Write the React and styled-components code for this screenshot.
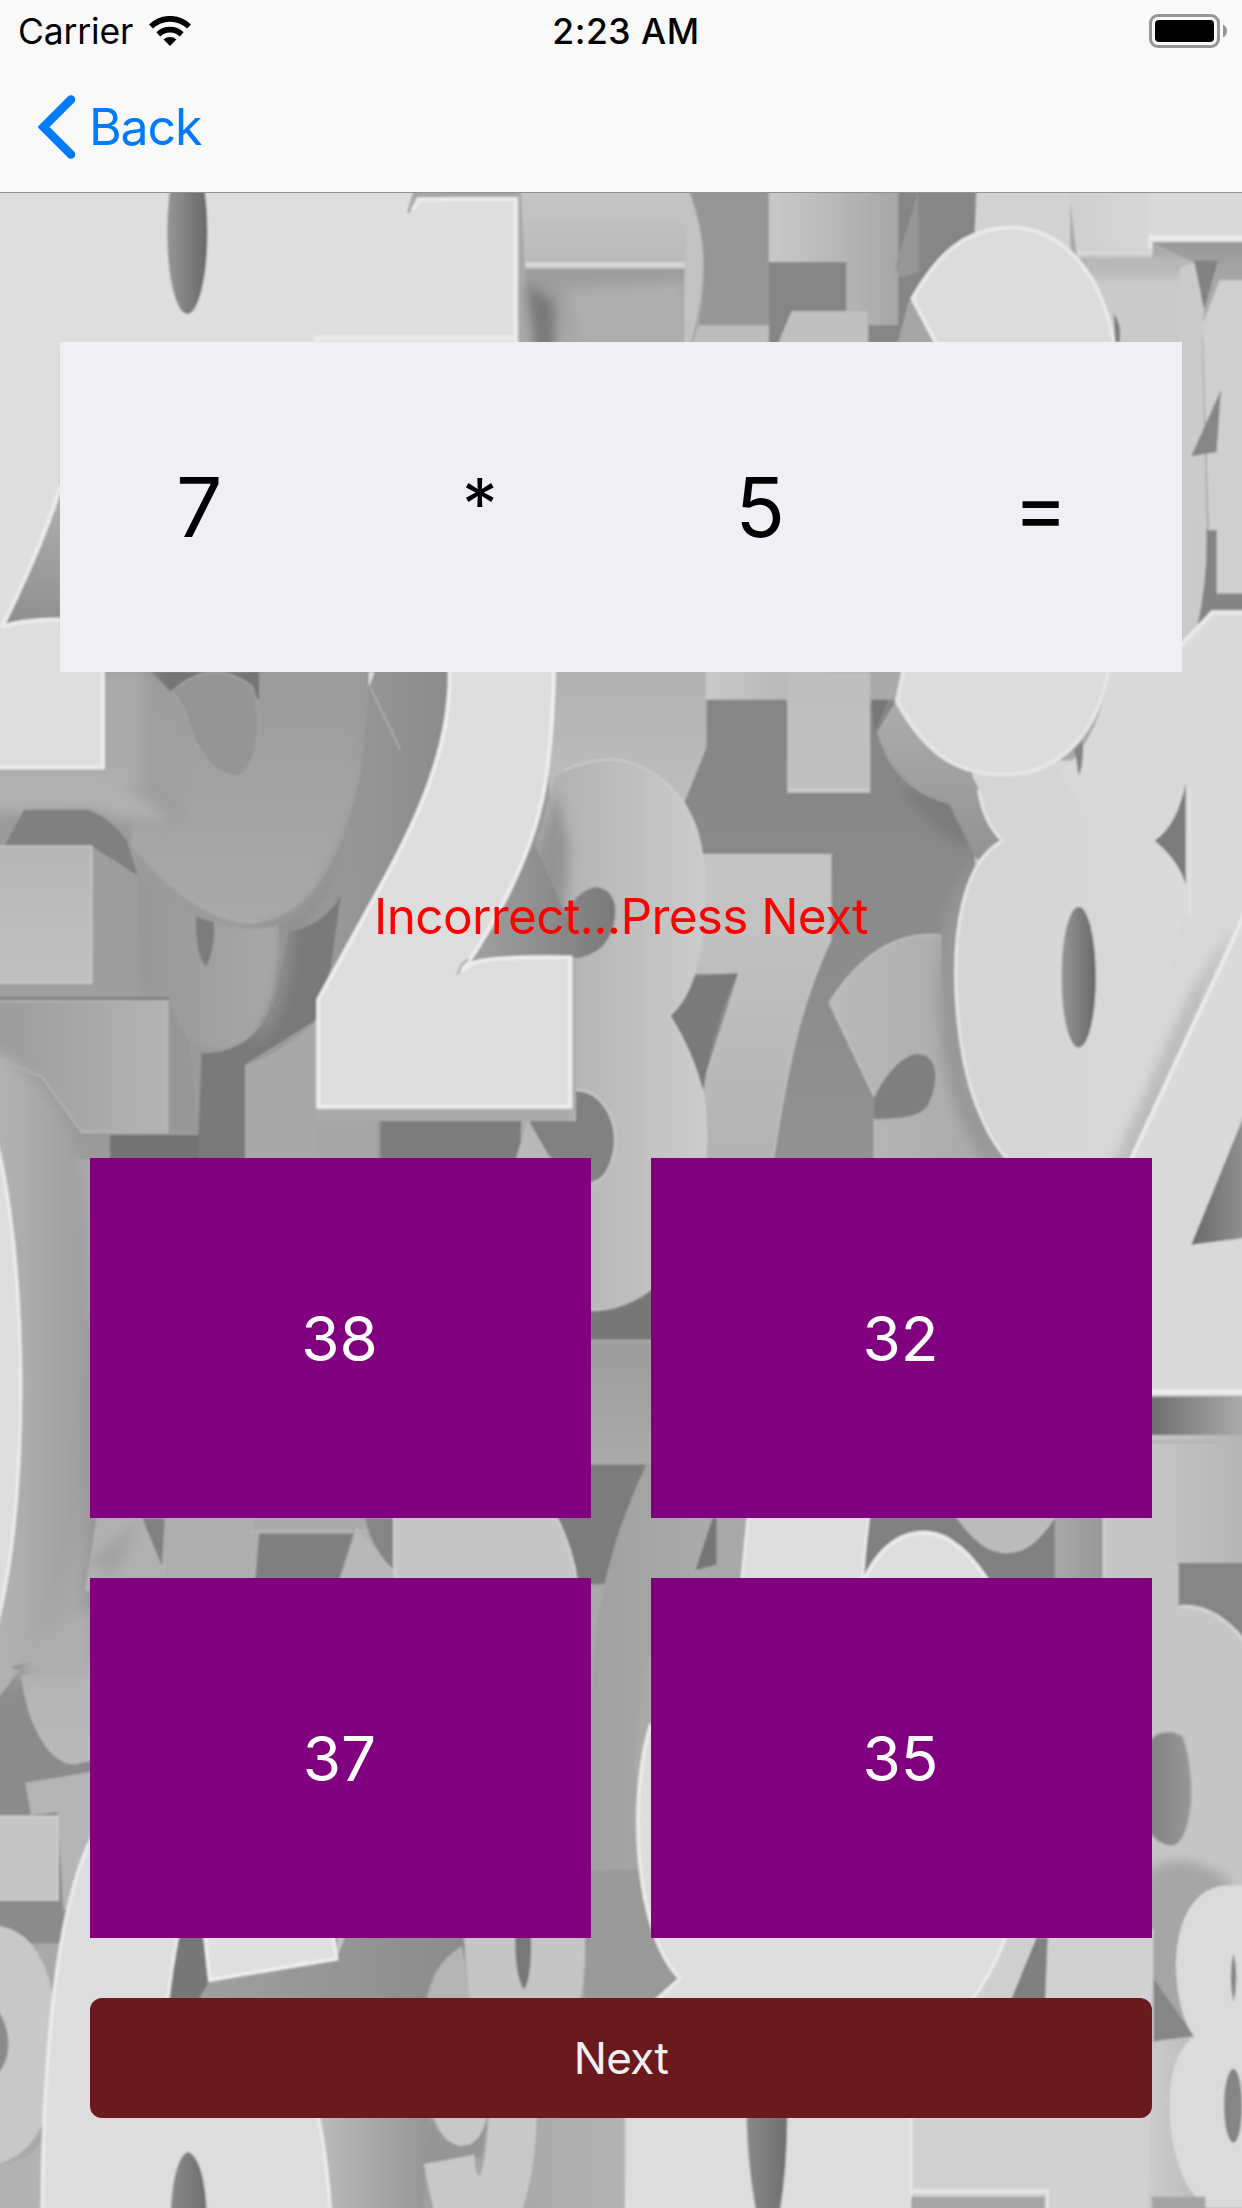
import React from "react";
import styled, { createGlobalStyle } from "styled-components";

const GlobalStyle = createGlobalStyle`
  body { margin: 0; background: #f9f9f9; }
  * { box-sizing: border-box; }
`;

const Screen = styled.div`
  width: 1242px;
  height: 2208px;
  display: flex;
  flex-direction: column;
  overflow: hidden;
  font-family: Inter, "Liberation Sans", sans-serif;
  color: #000;
`;

const Header = styled.header`
  flex: none;
  height: 193px;
  background: #f9f9f9;
  border-bottom: 1px solid #929292;
`;

const StatusBar = styled.div`
  height: 60px;
  display: grid;
  grid-template-columns: 1fr auto 1fr;
  align-items: center;
  padding: 2px 15px 0 18px;
`;

const Carrier = styled.div`
  display: flex;
  align-items: center;
  gap: 16px;
  font-size: 35.5px;
  letter-spacing: -0.15px;
`;

const Clock = styled.div`
  padding-left: 7px;
  font-size: 35.5px;
  font-weight: 500;
  letter-spacing: 0.5px;
`;

const BatterySlot = styled.div`
  justify-self: end;
  display: flex;
`;

const NavBar = styled.nav`
  height: 132px;
  padding: 1px 0 0 38px;
  display: flex;
  align-items: center;
`;

const BackButton = styled.button`
  display: flex;
  align-items: center;
  gap: 13px;
  padding: 0;
  border: 0;
  background: none;
  color: #007aff;
  font: inherit;
  font-size: 50px;
  letter-spacing: -1.1px;
`;

const Body = styled.main`
  position: relative;
  flex: 1;
  display: flex;
  flex-direction: column;
  padding: 149px 60px 90px;
`;

const Backdrop = styled.svg`
  position: absolute;
  left: 0;
  bottom: 0;
  width: 1242px;
  height: 2208px;
  clip-path: inset(193px 0 0 0);
`;

const Equation = styled.section`
  position: relative;
  height: 330px;
  display: grid;
  grid-template-columns: repeat(4, 1fr);
  align-items: center;
  text-align: center;
  background: #efeff4;
`;

const Term = styled.span`
  font-size: ${(p) => (p.$operator ? 71 : 82)}px;
  padding: 0 2px ${(p) => (p.$operator ? 7 : 0)}px 0;
`;

const Feedback = styled.p`
  position: relative;
  height: 486px;
  margin: 0;
  padding-top: 2px;
  display: flex;
  align-items: center;
  justify-content: center;
  color: #ff0000;
  font-size: 49.5px;
  letter-spacing: -0.62px;
`;

const Answers = styled.section`
  position: relative;
  display: grid;
  grid-template-columns: 1fr 1fr;
  grid-auto-rows: 360px;
  gap: 60px;
  padding: 0 30px;
`;

const Answer = styled.button`
  border: 0;
  padding: 0 2px 0 0;
  background: #800080;
  color: #fff;
  font: inherit;
  font-size: 62px;
`;

const NextButton = styled.button`
  position: relative;
  height: 120px;
  margin: 60px 30px 0;
  border: 0;
  padding: 0;
  border-radius: 12px;
  background: #6a1a1c;
  color: #efeff4;
  font: inherit;
  font-size: 44px;
  letter-spacing: -0.6px;
`;

const HI = "#ebebeb";

/* Pile of block numerals, back to front: [path, fill, edge highlight, edge width, blurred] */
const pile = [
  // upper edge
  ["M-9 120H368V250H-9z", "#dedede"],
  ["M298 120H368V140H296L289 151z", "#a6a6a6"],
  ["M296 137.500L290 151", "none", "#a8a8a8", 2],
  ["M293 149L298 142Q330 141 366 141.500V250", "none", HI, 3],
  ["M225 250V240H366", "none", HI, 3],
  ["M369 120H491V192H373z", "url(#topSlab)"],
  ["M373 188H490", "none", "#d6d6d6", 4],
  ["M373 191H490V250H379z", "url(#darkDown)"],
  ["M402 206L416 250H487V200z", "#aeaeae", null, 0, true],
  ["M374 200L380 250H394V215z", "#787878", null, 0, true],
  ["M489 120Q509 180 491 241L486 250V190z", "#c2c2c2"],
  ["M490 120H546V231H496Q506 180 490 137z", "#969696"],
  ["M546 186H606V221H562L552 250H546z", "#858585"],
  ["M546 120H640V232H601V186H546z", "url(#slabA)"],
  ["M638 120H694V170L645 215L636 250H617V231H638z", "#858585"],
  ["M652 137L636 188L638 197L652 194z", "#969696"],
  ["M496 231H546V250H490z", "#bcbcbc"],
  ["M562 221H616V250H550z", "#c0c0c0"],
  ["M694 120H760V220H690z", "#d2d2d2"],
  ["M757 120H818V184H765z", "url(#slabB)"],
  ["M765 180H817V168", "none", "#e6e6e6", 3],
  ["M772 185H852L860 480H795z", "#cacaca"],
  ["M760 182H852V196H772z", "#b6b6b6", null, 0, true],
  ["M815 120H892V172H815z", "#d9d9d9"],
  ["M816 169H892", "none", "#ebebeb", 4],
  ["M818 172H892V202H857L855 218L849 187z", "url(#underSlab)"],
  ["M848 185H865L855 220z", "#828282"],
  ["M866 199H892V424H860L854 230z", "#cfcfcf"],
  ["M838 190L848 187L855 220L842 460z", "#cbcbcb"],
  ["M867 277L864 321L846 324z", "#868686"],
  ["M856.600 376.500H864V421.500H892V433H860L850 446Q858 410 856.600 376.500z", "#848484"],
  ["M648 212L635 250H668z", "#a5a5a5"],
  ["M668 250L648 212C664 184 683 162 718 161.500C753 162 784 192 792 250z", "#dbdbdb", "#e9e9e9", 2.800],
  ["M791 223Q797 230 795 243H792z", "#7e7e7e"],
  // left edge next to the equation panel
  ["M-9 240H43V550H-9z", "#dedede"],
  ["M43 346Q31 385 3 443Q15 439 43 439z", "url(#wedge)"],
  ["M43 345Q31 385 1 446Q15 440 43 440", "none", HI, 3],

  // middle band, far layer
  ["M43 470H420V823H-9V560z", "#9b9b9b"],
  ["M232 470H320L318 540L225 720L210 700L250 600z", "url(#slatMid)"],
  ["M256 477H266L262 488z", "#e3e3e3"],
  ["M263 488L284 532", "none", "#acacac", 1.500],
  ["M100 470H262C262 560 240 650 180 656C142 656 110 620 93 601z", "url(#nine)"],
  ["M261 470C262 545 250 600 219 640Q205 658 180 657Q195 668 214 661C236 640 250 600 254 562z", "#8f8f8f", null, 0, true],
  ["M107 477H184V497L165 484L121 491z", "#747474"],
  ["M122 491Q150 466 179 487C188 510 182 552 167 551C150 550 139 530 134 514Q130 499 122 491z", "#959595", "#a6a6a6", 1],
  ["M98 620Q110 640 137 650Q165 664 198 657C198 700 190 742 157 744Q110 742 100 690z", "url(#nineSmall)"],
  ["M139 651L152 655Q153 672 147 686Q139 682 139 651z", "#7c7c7c"],
  ["M242 636L235 686L225 724L174 756V830H140L143 748C170 748 190 734 197 700L205 662Q230 657 242 636z", "#797979"],
  ["M198 657L208 661Q204 730 178 742Q202 706 198 657z", "#929292", null, 0, true],
  ["M225 724V830H174V757Q205 745 225 724z", "#a8a8a8"],
  ["M225 790H268V830H225z", "#a6a6a6"],
  ["M270 795H380V830H270z", "#7d7d7d"],
  ["M74 477H107Q118 497 132 515V585Q100 590 62 575L-9 577V545z", "#9f9f9f", null, 0, true],
  ["M74 477H100V560H74z", "#acacac", null, 0, true],
  ["M-9 546H74L120 582Q90 584 64 574L-9 577z", "#b0b0b0", null, 0, true],
  ["M17 575H62Q78 580 90 597L98 622L65 601H3z", "#808080"],
  ["M-9 446H74V545H-9z", "#dedede"],
  ["M73 477V545H-9", "none", HI, 3],
  ["M65 601L98 622V709H-9V698H65z", "#9e9e9e"],
  ["M-9 601H65V698H-9z", "url(#blockTwo)", "#c5c5c5", 1.500],
  ["M-9 708H120V712H-9z", "#808080"],
  ["M119 711L135 742L140 804H119z", "#979797"],
  ["M-9 711H119V804H58L30 765L-9 748z", "url(#blockThree)", "#b8b8b8", 1.200],
  ["M78 806H141V830H78z", "#737373"],
  ["M-9 744Q26 757 49 802Q66 846 64 985C67 1100 40 1170 -9 1220z", "url(#zeroSide)", null, 0, true],
  ["M62 940H72V1200H58z", "#979797", null, 0, true],
  ["M-9 790C21 870 24 1090 -9 1174z", "#dddddd", HI, 2.500],

  // three behind the two
  ["M390 470H501V533L486 570L430 545L390 600z", "url(#slabRise)"],
  ["M501 470H618V497H501z", "url(#slabA)"],
  ["M486 570L502 530V497H710V830H490z", "url(#voidMid)"],
  ["M559 490H618V563H559z", "#c0c0c0"],
  ["M559 477H618V500H559z", "#bebebe"],
  ["M560 561H617", "none", "#cccccc", 2.500],
  ["M499 607H590V667C570 710 560 750 548 830H498V775L525 691H490z", "url(#seven)", "#c6c6c6", 1],
  ["M494 693L524 691Q508 725 499 776L476 722z", "#7a7a7a"],
  ["M394 552Q423 531 452 543C491 560 502 595 500 640Q498 703 475 721Q492 747 500 780C508 850 486 934 420 930L370 820V640z", "url(#three)"],
  ["M401 547Q430 534 452 543C491 560 502 595 500 640Q498 703 475 721Q492 747 500 780C508 850 486 934 420 930", "none", "#cccccc", 1.500],
  ["M395 560L376 620L345 676L400 678L404 600z", "#949494", null, 0, true],
  ["M401 648Q413 630 424 630Q437 632 437 648Q435 679 405 681H330L380 600z", "url(#holeThree)"],
  ["M409 774C426 774 438 792 437 813C435 827 430 838 421 840L388 820L376 797z", "#818181"],
  ["M409 774C426 774 438 792 437 813C435 827 430 838 421 840", "none", "#c6c6c6", 2],
  ["M375 795L364 830H395z", "#b9b9b9"],
  ["M225 786H409V796H225z", "#aaaaaa"],
  ["M406 680H409V796H404z", "#b0b0b0"],
  ["M319 470C323 530 292 590 270 630Q247 672 226 710V786H405V680Q350 679 335 684L328 690Q376 620 387 558Q393 520 393.500 470z", "#dddddd", "#eeeeee", 2.800],
  ["M325 692L328 685L333 681", "none", "#acacac", 1.500],

  // eights, fours on the right
  ["M690 540H890V830H700z", "url(#eightFace)"],
  ["M839 455L860 434H892V680L800 560L780 470z", "#dadada"],
  ["M838 459L861 435H892", "none", "#e9e9e9", 3],
  ["M619 497H631L621 520z", "#777777"],
  ["M640 560Q660 590 684 600L700 590L690 560z", "#7c7c7c", null, 0, true],
  ["M636 498L623 520Q634 561 674 571L694 611L712 597L690 550z", "url(#threeSide)"],
  ["M643 470L637 498C660 540 684 550 714 550C752 550 782 520 788 470z", "#dbdbdb", "#e6e6e6", 2.800],
  ["M789 470Q782 525 752 549L780 590H846V470z", "#d9d9d9"],
  ["M763 532L769 526Q770 542 766 551z", "#858585"],
  ["M589 712Q622 660 668 664V700L705 830H621V795L640 780L621 779z", "url(#twoBack)", "#c0c0c0", 1.200],
  ["M621 779C631 759 645 746 655 749C668 753 665 771 660 783C655 794 640 794 621 795z", "#7f7f7f"],
  ["M694 610C669 635 661 690 669 745Q677 800 704 830H722L688 770L681 650z", "#989898", null, 0, true],
  ["M695 560Q699 585 712 597C684 612 677 660 679 705C682 770 700 810 722 830H802L850 600z", "url(#eightFace)"],
  ["M695 561Q699 585 712 597C684 612 677 660 679 705C682 770 700 810 722 830", "none", "#e6e6e6", 2.200],
  ["M845 560V650", "none", "#e2e2e2", 1.500],
  ["M842 556Q836 586 820 597Q837 611 842 628z", "#7c7c7c"],
  ["M880 652L802 840H784L845 705z", "#bcbcbc", null, 0, true],
  ["M892 632L800 830V988H892z", "#dadada"],
  ["M892 632L800 830", "none", "#ebebeb", 2.800],
  ["M892 771L846 884L892 878z", "url(#fourHole)"],
  ["M810 989H892", "none", "#ebebeb", 4],

  // strip between answer columns and rows
  ["M419 931Q444 931 464 915V952H419z", "#777777"],
  ["M419 952H464V1040H419z", "url(#darkDown)", "#b4b4b4", 1],
  ["M385 1040H464V1125H385z", "#7b7b7b"],
  ["M70 1070H280V1130H60z", "#b0b0b0"],
  ["M101 1078H117L115 1112z", "#818181"],
  ["M64 1108L99 1080L82 1120z", "#a3a3a3", null, 0, true],
  ["M118 1070H177V1130H118z", "#adadad"],
  ["M178 1070H260V1087H178z", "#aaaaaa", "#b6b6b6", 1],
  ["M184 1089H253L240 1125H181z", "#808080"],
  ["M253 1084L240 1125H290z", "#b8b8b8"],
  ["M259 1078H279V1114Q265 1102 259 1078z", "#858585"],
  ["M280 1070H391Q406 1095 410 1125H283L280 1116z", "#c6c6c6", "#d2d2d2", 1.500],
  ["M415 1328H490V1425H415z", "#9a9a9a"],
  ["M460 1038C435 1090 422 1140 420 1200V1328H458L450 1253L458 1186L494 1116L512 1070L470 1038z", "url(#stem)"],
  ["M506 1078H509V1111L494 1115z", "#757575"],
  ["M509 1070H531V1130H490L495 1116L509 1112z", "#a9a9a9"],
  ["M617 1070H755V1130H610z", "#818181"],
  ["M674 1070H754Q735 1104 715 1103Q695 1104 674 1070z", "#bbbbbb"],
  ["M749 1070H784V1130H749z", "url(#slabRev)"],
  ["M532 1070H618Q614 1095 612 1130H526z", "#dddddd", HI, 2],
  ["M610 1130Q627 1088 657 1088.500Q682 1089 706 1130z", "#dddddd", HI, 3],
  ["M784 1070H892V1340H784z", "#c6c6c6", "#d2d2d2", 2],
  ["M815 992H892V1020H815z", "url(#darkBar)"],
  ["M815 1019H892V1112H815z", "url(#barLow)"],
  ["M816 1024H865", "none", "#b2b2b2", 2],
  ["M837 1110H892V1174Q868 1139 837 1140z", "#858585"],
  ["M838 1141Q866 1139 888 1172", "none", "#d2d2d2", 2.500],
  ["M812 1240Q824 1224 840 1233Q847 1252 846 1280Q843 1310 832 1311Q820 1310 812 1295z", "url(#holeSix)", "#b8b8b8", 1.200],

  // lower right
  ["M812 1330Q840 1310 874 1336L840 1440H812z", "#a6a6a6", null, 0, true],
  ["M817 1402L848 1446L817 1450z", "#868686"],
  ["M743 1370H819V1580H640V1419z", "#d1d1d1"],
  ["M818 1450L848 1446L830 1496L857 1580H815z", "url(#eightShadow)"],
  ["M892 1339H872C850 1339 836 1360 835 1395Q836 1430 848 1446C828 1460 828 1500 834 1526Q840 1555 857 1568H892z", "#dbdbdb"],
  ["M876 1387Q880 1404 876 1422Q872 1404 876 1387z", "#858585"],
  ["M876 1469C884 1472 884 1519 876 1522C867 1519 867 1472 876 1469z", "#858585"],
  ["M714 1370H736L716 1425H688z", "#cfcfcf"],
  ["M736 1376H744L742 1425H716z", "#808080"],
  ["M462 1225C445 1280 452 1375 483 1405L463 1423H688Q706 1400 716 1370L720 1230z", "#dddddd", HI, 2.500],
  ["M443 1500H647V1580H446Q442 1540 443 1500z", "#dddddd", "#e7e7e7", 2],
  ["M530 1490H559Q560 1540 552 1580H539Q530 1540 530 1490z", "url(#holeDark)"],
  ["M648 1556H744", "none", "#e5e5e5", 3],
  ["M647 1560H742V1580H647z", "#a6a6a6"],
  ["M744 1554V1580", "none", "#e3e3e3", 2],
  ["M818 1560H856V1580H818z", "#a4a4a4"],

  // lower left
  ["M-9 1190L20 1180H66V1380H-9z", "#8b8b8b"],
  ["M-9 1216L14 1186L-9 1180z", "#b0b0b0"],
  ["M66 1118V1180L15 1190C20 1230 37 1253 53 1253L66 1250V1118z", "url(#lowerCurve)"],
  ["M4 1208L22 1170L66 1140V1190L15 1192z", "#adadad", null, 0, true],
  ["M18 1266L66 1258V1340L45 1357L41 1287L22 1289z", "#b5b5b5"],
  ["M-9 1290H41V1349H-9z", "#c5c5c5", "#d0d0d0", 1.500],
  ["M-9 1367C25 1367 39 1398 41 1450C42 1504 21 1536 -9 1538z", "#c8c8c8"],
  ["M-9 1420Q6 1432 6 1453Q5 1470 -9 1480z", "#8b8b8b"],
  ["M-9 1538Q20 1537 30 1520V1580H-9z", "#b3b3b3"],
  ["M120 1370H330V1425H110z", "url(#floor)"],
  ["M128 1370H149V1406L138 1425H116z", "#777777"],
  ["M240 1370H247L239 1391z", "#c4c4c4"],
  ["M145 1370H236L239 1391L149 1406z", "#e0e0e0", "#efefef", 2.500],
  ["M328 1382Q306 1395 302 1425H336z", "#b4b4b4"],
  ["M329 1370H415Q417 1400 411 1425H334z", "#c5c5c5"],
  ["M366 1370H377Q378 1405 372 1413Q365 1402 366 1370z", "#787878"],
  ["M223 1490H306L300 1580H230z", "url(#floorTwo)"],
  ["M306 1490H444V1580H300z", "url(#floorThree)"],
  ["M307 1500H346Q342 1524 328 1524Q313 1522 307 1500z", "#c8c8c8"],
  ["M306 1504Q314 1524 328 1524Q339 1524 346 1507L342 1532L301 1536z", "#959595"],
  ["M301 1537L337 1530Q337 1545 341 1545Q346 1530 347 1500H381Q381 1545 367 1580H311Q304 1555 301 1537z", "#c8c8c8"],
  ["M127 1370Q121 1400 118 1430H205Q232 1500 235 1580H30C30 1470 39 1350 68 1300z", "#dddddd", "#ebebeb", 2.500],
  ["M133.500 1528C144 1532 147 1560 147 1580H121C121 1560 124 1532 133.500 1528z", "url(#holeDark)"],
];

const gradients = [
  ["topSlab", 0, "#c9c9c9", "#b9b9b9"],
  ["underSlab", 0, "#989898", "#b4b4b4"],
  ["darkDown", 0, "#9c9c9c", "#aaaaaa"],
  ["slabA", 1, "#c9c9c9", "#a6a6a6"],
  ["slabB", 1, "#cecece", "#d8d8d8"],
  ["slabRise", 0, "#b1b1b1", "#c1c1c1"],
  ["wedge", 0, "#b1b1b1", "#8f8f8f"],
  ["slatMid", 1, "#9d9d9d", "#8b8b8b"],
  ["nine", 0, "#9b9b9b", "#aaaaaa"],
  ["nineSmall", 1, "#989898", "#a8a8a8"],
  ["blockTwo", 0, "#b6b6b6", "#c1c1c1"],
  ["blockThree", 1, "#9a9a9a", "#b4b4b4"],
  ["zeroSide", 1, "#b5b5b5", "#9d9d9d"],
  ["voidMid", 0, "#858585", "#929292"],
  ["seven", 0, "#c6c6c6", "#b2b2b2"],
  ["three", 1, "#acacac", "#cccccc"],
  ["holeThree", 1, "#a3a3a3", "#797979"],
  ["eightFace", 1, "#d5d5d5", "#dadada"],
  ["threeSide", 0, "#adadad", "#929292"],
  ["twoBack", 1, "#bababa", "#a8a8a8"],
  ["fourHole", 1, "#696969", "#999999"],
  ["stem", 1, "#a0a0a0", "#acacac"],
  ["slabRev", 1, "#a9a9a9", "#989898"],
  ["darkBar", 1, "#6c6c6c", "#b4b4b4"],
  ["barLow", 1, "#c6c6c6", "#b3b3b3"],
  ["holeSix", 1, "#808080", "#979797"],
  ["eightShadow", 1, "#cbcbcb", "#bababa"],
  ["holeDark", 1, "#8a8a8a", "#6e6e6e"],
  ["lowerCurve", 0, "#adadad", "#bababa"],
  ["floor", 1, "#a4a4a4", "#8b8b8b"],
  ["floorTwo", 1, "#bcbcbc", "#959595"],
  ["floorThree", 1, "#a0a0a0", "#b3b3b3"],
  ["ovalShade", 1, "#969696", "#696969"],
];

function NumberPile() {
  return (
    <Backdrop viewBox="0 0 882 1568" preserveAspectRatio="none" aria-hidden="true">
      <defs>
        {gradients.map(([id, across, from, to]) => (
          <linearGradient key={id} id={id} x1="0" y1="0" x2={across} y2={1 - across}>
            <stop offset="0" stopColor={from} />
            <stop offset="1" stopColor={to} />
          </linearGradient>
        ))}
        <filter id="soft" x="0" y="0" width="100%" height="100%">
          <feGaussianBlur stdDeviation="0.8" />
        </filter>
        <filter id="shade" x="-60%" y="-60%" width="220%" height="220%">
          <feGaussianBlur stdDeviation="4" />
        </filter>
      </defs>
      <g filter="url(#soft)">
        <path d="M-10 120H892V1580H-10z" fill="#a9a9a9" />
        {pile.map(([d, fill, edge, width, blurred], i) => (
          <path
            key={i}
            d={d}
            fill={fill}
            stroke={edge || "none"}
            strokeWidth={width}
            filter={blurred ? "url(#shade)" : undefined}
          />
        ))}
        <ellipse cx="133" cy="165" rx="14.300" ry="58" fill="url(#ovalShade)" />
        <ellipse cx="766" cy="694" rx="12.200" ry="50" fill="url(#ovalShade)" />
      </g>
    </Backdrop>
  );
}

function WifiIcon() {
  return (
    <svg width="42" height="30" viewBox="0 0 42 30">
      <g fill="none" stroke="#000" strokeWidth="5.700">
        <path d="M2 10.600A27 27 0 0 1 40 10.600" />
        <path d="M9.300 18.300A17.200 17.200 0 0 1 32.700 18.300" />
      </g>
      <path d="M14.600 23.600A9.500 9.500 0 0 1 27.400 23.600L21 30z" fill="#000" />
    </svg>
  );
}

function BatteryIcon() {
  return (
    <svg width="78" height="34" viewBox="0 0 78 34">
      <rect x="1.500" y="1.500" width="68" height="31" rx="7.500" fill="none" stroke="#959595" strokeWidth="3" />
      <rect x="6" y="6" width="59" height="22" rx="4" fill="#000" />
      <path d="M74 10.500Q78 12.500 78 17T74 23.500z" fill="#959595" />
    </svg>
  );
}

function ChevronIcon() {
  return (
    <svg width="38" height="64" viewBox="0 0 38 64">
      <path d="M33 4.500L5.500 32L33 59.500" fill="none" stroke="#007aff" strokeWidth="8.500" strokeLinecap="round" />
    </svg>
  );
}

export default function App() {
  return (
    <Screen>
      <GlobalStyle />
      <Header>
        <StatusBar>
          <Carrier>
            Carrier
            <WifiIcon />
          </Carrier>
          <Clock>2:23 AM</Clock>
          <BatterySlot>
            <BatteryIcon />
          </BatterySlot>
        </StatusBar>
        <NavBar>
          <BackButton>
            <ChevronIcon />
            Back
          </BackButton>
        </NavBar>
      </Header>
      <Body>
        <NumberPile />
        <Equation>
          {["7", "*", "5", "="].map((part) => (
            <Term key={part} $operator={part === "*"}>
              {part}
            </Term>
          ))}
        </Equation>
        <Feedback>Incorrect...Press Next</Feedback>
        <Answers>
          {[38, 32, 37, 35].map((value) => (
            <Answer key={value}>{value}</Answer>
          ))}
        </Answers>
        <NextButton>Next</NextButton>
      </Body>
    </Screen>
  );
}
